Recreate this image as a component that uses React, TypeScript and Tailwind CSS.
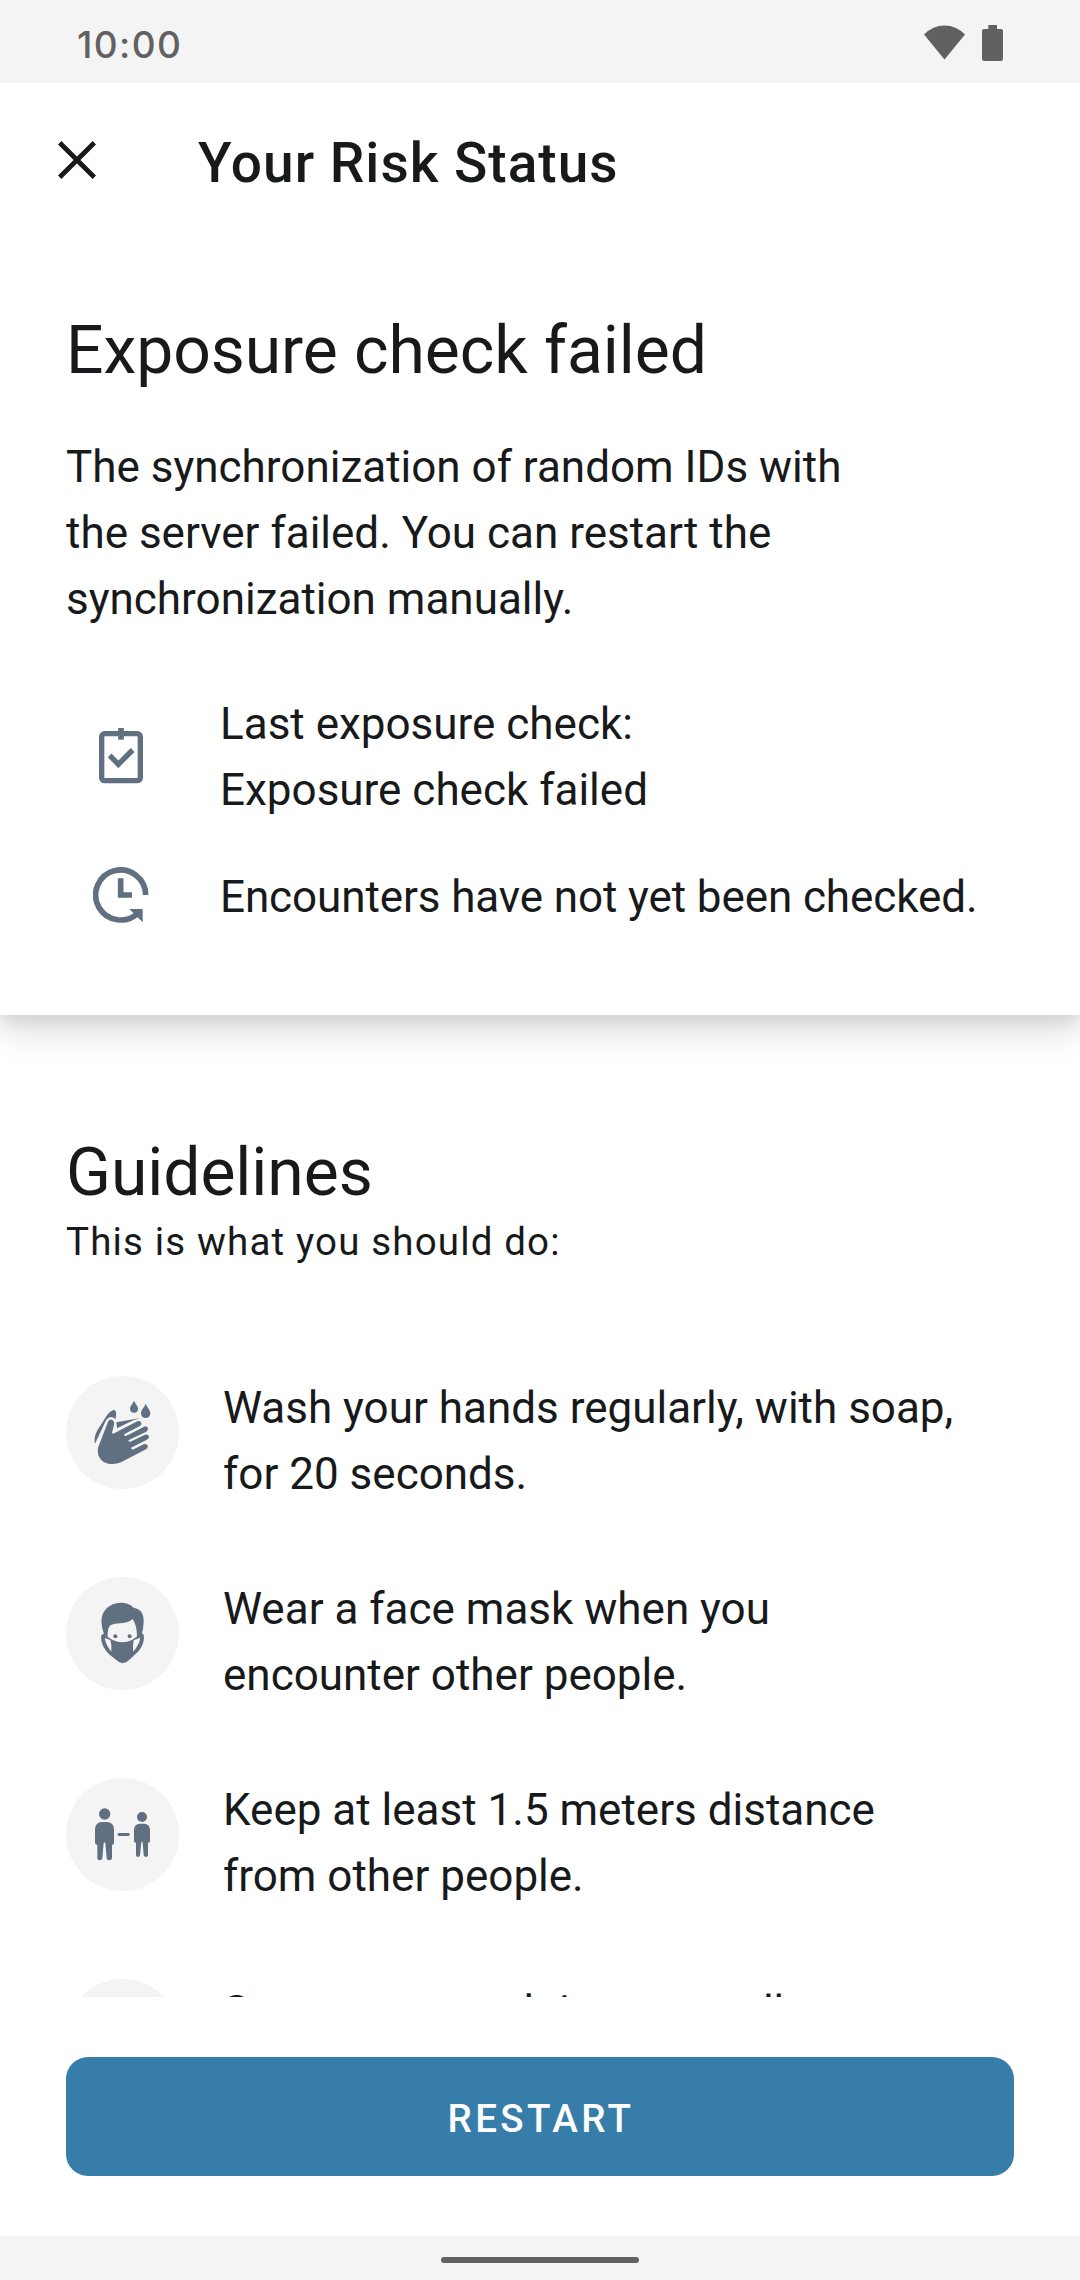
import React from "react";

function ClipboardIcon() {
  return (
    <svg width="44" height="56" viewBox="0 0 132 168" fill="none" stroke="#617080" strokeWidth="16">
      <rect x="8" y="17" width="116" height="141" rx="9" />
      <path d="M66 0V35" strokeWidth="17" />
      <path d="M32 82L58 109L101 66" strokeWidth="16" />
    </svg>
  );
}

function ClockIcon() {
  return (
    <svg width="56" height="56" viewBox="0 0 168 168" fill="none" stroke="#617080">
      <path d="M158 84A75 75 0 1 0 136 137" strokeWidth="17" />
      <path d="M83 34V84H117" strokeWidth="17" />
      <path d="M109 126H149V166L133 150Z" fill="#617080" stroke="none" />
    </svg>
  );
}

function WashIcon() {
  return (
    <svg width="113" height="113" viewBox="48 48 339 339" fill="#617080">
      <path d="M252 122C256 131 264 138 264 146A12 12 0 0 1 240 146C240 138 248 131 252 122Z" />
      <path d="M287 131C291 142 301 150 301 160A14 14 0 0 1 273 160C273 150 283 142 287 131Z" />
      <path d="M135 251C131 236 136 219 148 202L173 163Q181 153 192 149Q200 153 198 164L197 178Q186 168 176 173Q169 177 166 185Z" />
      <path d="M199 187L271 174L250 181L201 205Z" />
      <path d="M174 185Q179 176 187 180Q194 185 192 195L186 218Q187 223 194 219L262 184Q271 181 274 188Q276 194 270 198L222 223Q222 229 228 228L282 200Q291 197 294 204Q295 211 289 215L235 241Q235 246 241 245L285 224Q294 222 297 229Q298 236 291 239L243 263Q244 270 251 268L281 253Q290 250 293 257Q295 264 288 268L213 307Q197 314 174 311Q153 307 145 286Q141 274 145 260Z" />
    </svg>
  );
}

function MaskIcon() {
  return (
    <svg width="113" height="113" viewBox="48 51 339 339" fill="#617080">
      <path d="M163 227Q155 205 154 184C155 150 178 130 212 128Q237 128 251 143C274 147 282 163 281 185Q280 207 275 224L261 232Q261 195 248 177Q236 188 211 190Q192 190 181 196Q172 204 173 230Z" />
      <circle cx="196" cy="229" r="6" />
      <circle cx="239" cy="229" r="6" />
      <path
        fillRule="evenodd"
        d="M155 224Q159 219 165 226L188 240Q217 254 246 240L271 222Q278 217 281 225C285 245 273 269 259 280L238 299Q218 320 199 300L179 284Q154 260 153 233ZM164 234Q167 255 184 275Q186 255 181 240ZM251 241Q248 258 249 275Q267 256 271 233Z"
      />
    </svg>
  );
}

function DistanceIcon() {
  return (
    <svg width="113" height="113" viewBox="48 54 339 339" fill="#617080">
      <circle cx="164" cy="162" r="17" />
      <path d="M135 207Q137 186 156 186H171Q191 187 192 207V249Q192 254 186 255V295Q185 301 178 301Q171 301 170 295L166 249Q164 245 161 249L157 295Q156 301 149 301Q143 301 142 295V255Q136 254 135 249Z" />
      <circle cx="276" cy="171" r="15" />
      <path d="M252 207Q254 192 269 191H283Q298 192 300 207V244Q300 248 294 249V286Q293 291 288 291Q282 291 281 286L278 247Q276 244 274 247L270 286Q269 291 264 291Q259 291 258 286V249Q252 248 252 244Z" />
      <rect x="203" y="219" width="36" height="9" rx="4" />
    </svg>
  );
}

function Guideline({ icon, lines }: { icon?: React.ReactNode; lines: string[] }) {
  return (
    <li className="flex h-[201px] shrink-0 items-start last:h-[202px] last:[&>p]:mt-px">
      <div className="mt-px size-[113px] shrink-0 rounded-full bg-[#f4f4f4]">{icon}</div>
      <p className="ml-[44px] whitespace-nowrap text-[44px] leading-[66px]">
        {lines.map((line) => (
          <span key={line} className="block">{line}</span>
        ))}
      </p>
    </li>
  );
}

export default function App() {
  return (
    <div className="flex h-[2280px] w-[1080px] flex-col overflow-hidden bg-white font-['Roboto',sans-serif] text-[#17191a]">
      <div className="flex h-[83px] shrink-0 items-center justify-between bg-[#f4f4f4] pl-[77px] pr-[77px] text-[#616161]">
        <span className="mt-[5px] font-['Inter',sans-serif] text-[37px] font-medium leading-none tracking-[1.4px]">10:00</span>
        <div className="mt-[3px] flex items-start gap-[17px]">
          <svg width="41" height="36" viewBox="0 0 41 36" fill="currentColor">
            <path d="M0 9.5Q9 0.5 20.5 0.5T41 9.5L20.5 34.5Z" />
          </svg>
          <svg width="21" height="36" viewBox="0 0 21 36" fill="currentColor">
            <path d="M6.300 0H15V4H19Q21 4 21 6V33.500Q21 36 19 36H2Q0 36 0 33.500V6Q0 4 2 4H6.300Z" />
          </svg>
        </div>
      </div>

      <main className="flex min-h-0 flex-1 flex-col overflow-hidden">
        <section className="flex h-[932px] shrink-0 flex-col bg-white shadow-[0_6px_14px_rgba(0,0,0,0.07),0_16px_32px_rgba(0,0,0,0.14)]">
          <header className="flex h-[154px] shrink-0 items-center pl-[58px]">
            <button aria-label="Close">
              <svg width="38" height="38" viewBox="0 0 38 38" stroke="#17191a" strokeWidth="4.800">
                <path d="M1.700 1.700L36.300 36.300M36.300 1.700L1.700 36.300" />
              </svg>
            </button>
            <h1 className="ml-[102px] mt-[5px] text-[55px] font-medium leading-[66px] tracking-[1px]">Your Risk Status</h1>
          </header>
          <div className="px-[66px] pt-[76px]">
            <h2 className="text-[66px] leading-[76px] tracking-[-0.05px]">Exposure check failed</h2>
            <p className="mt-[45px] text-[44px] leading-[66px]">
              The synchronization of random IDs with<br />
              the server failed. You can restart the<br />
              synchronization manually.
            </p>
          </div>
          <div className="mt-[59px] flex flex-col gap-[41px] pl-[66px]">
            <div className="flex items-center">
              <div className="mb-[3px] flex w-[110px] justify-center"><ClipboardIcon /></div>
              <p className="ml-[44px] text-[44px] leading-[66px]">Last exposure check:<br />Exposure check failed</p>
            </div>
            <div className="flex h-[66px] items-center">
              <div className="mb-[5px] flex w-[110px] justify-center"><ClockIcon /></div>
              <p className="ml-[44px] whitespace-nowrap text-[44px] leading-[66px] tracking-[-0.1px]">Encounters have not yet been checked.</p>
            </div>
          </div>
        </section>

        <section className="flex flex-col px-[66px] pt-[120px]">
          <h2 className="text-[66px] leading-[76px] tracking-[-0.05px]">Guidelines</h2>
          <p className="mt-[5px] text-[38.5px] leading-[52px] tracking-[0.03em]">This is what you should do:</p>
          <ul className="mt-[107px] flex flex-col">
            <Guideline icon={<WashIcon />} lines={["Wash your hands regularly, with soap,", "for 20 seconds."]} />
            <Guideline icon={<MaskIcon />} lines={["Wear a face mask when you", "encounter other people."]} />
            <Guideline icon={<DistanceIcon />} lines={["Keep at least 1.5 meters distance", "from other people."]} />
            <Guideline lines={["Sneeze or cough into your elbow", "or into a tissue."]} />
          </ul>
        </section>
      </main>

      <footer className="flex h-[239px] shrink-0 flex-col px-[66px] pt-[60px]">
        <button className="flex h-[119px] items-center justify-center rounded-[22px] bg-[#367daa] pl-[2px] pt-[4px] text-[38.5px] font-medium tracking-[0.0893em] text-white">
          RESTART
        </button>
      </footer>
      <div className="flex h-[44px] shrink-0 justify-center bg-[#f4f4f4] pt-[21px]">
        <div className="h-[6px] w-[198px] rounded-[3px] bg-[#616161]" />
      </div>
    </div>
  );
}
